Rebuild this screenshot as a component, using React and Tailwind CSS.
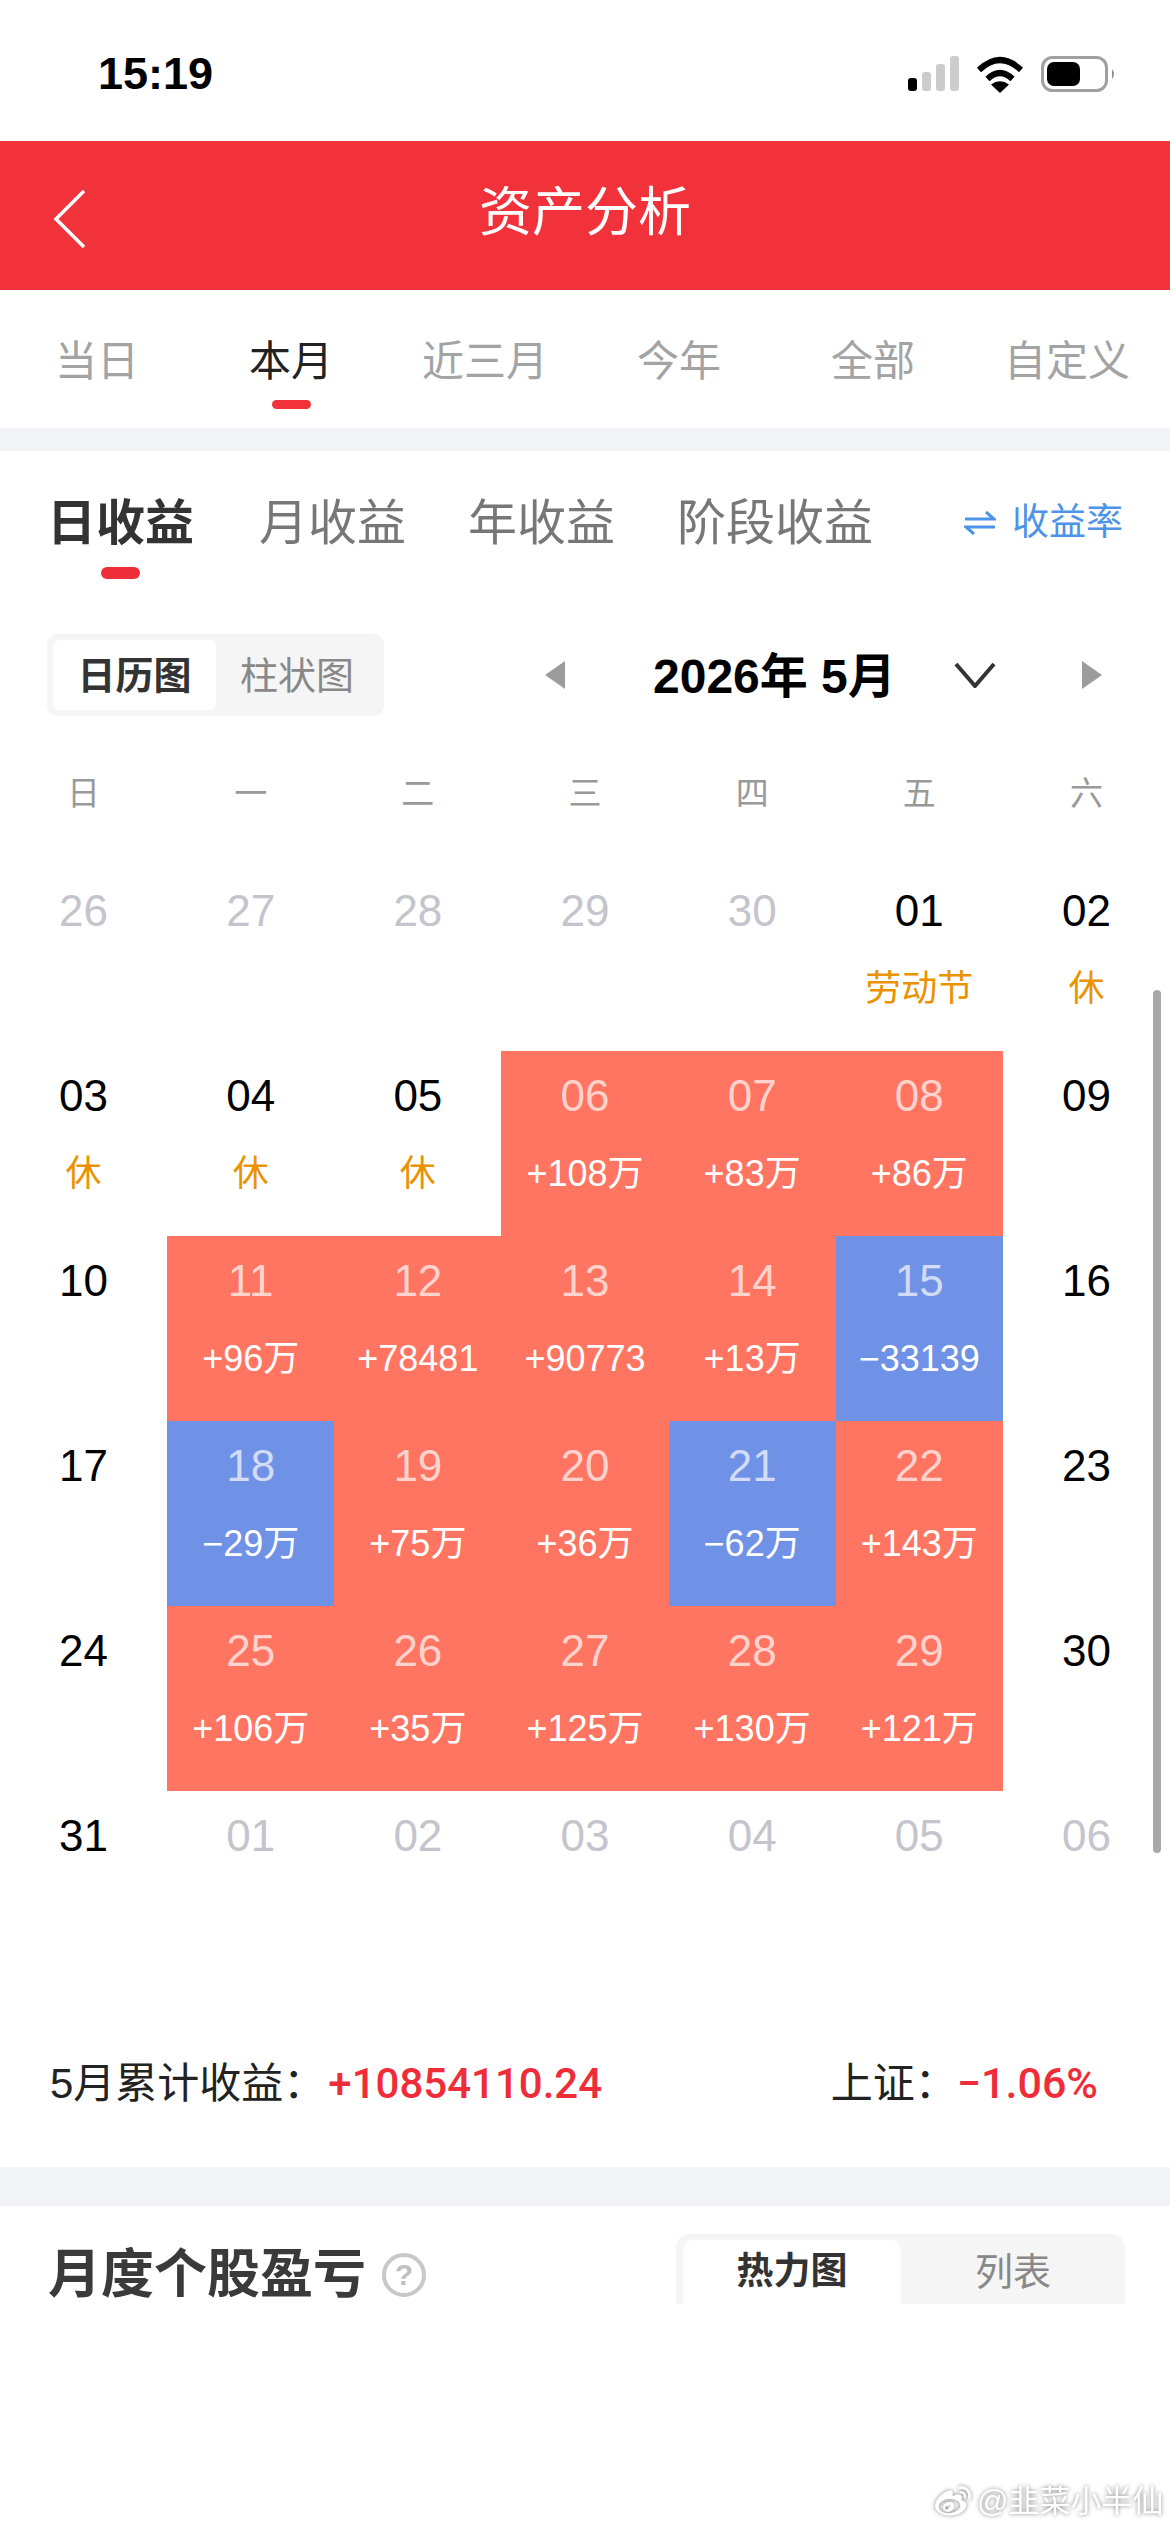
import React from 'react';
import { FaWeibo } from 'react-icons/fa';

const periodTabs = ['当日', '本月', '近三月', '今年', '全部', '自定义'];
const weekDays = ['日', '一', '二', '三', '四', '五', '六'];

// tone: muted = other month, plain = no trading, up = gain, down = loss
const weeks = [
  [
    { d: '26', tone: 'muted' },
    { d: '27', tone: 'muted' },
    { d: '28', tone: 'muted' },
    { d: '29', tone: 'muted' },
    { d: '30', tone: 'muted' },
    { d: '01', tone: 'plain', note: '劳动节' },
    { d: '02', tone: 'plain', note: '休' },
  ],
  [
    { d: '03', tone: 'plain', note: '休' },
    { d: '04', tone: 'plain', note: '休' },
    { d: '05', tone: 'plain', note: '休' },
    { d: '06', tone: 'up', value: '+108万' },
    { d: '07', tone: 'up', value: '+83万' },
    { d: '08', tone: 'up', value: '+86万' },
    { d: '09', tone: 'plain' },
  ],
  [
    { d: '10', tone: 'plain' },
    { d: '11', tone: 'up', value: '+96万' },
    { d: '12', tone: 'up', value: '+78481' },
    { d: '13', tone: 'up', value: '+90773' },
    { d: '14', tone: 'up', value: '+13万' },
    { d: '15', tone: 'down', value: '−33139' },
    { d: '16', tone: 'plain' },
  ],
  [
    { d: '17', tone: 'plain' },
    { d: '18', tone: 'down', value: '−29万' },
    { d: '19', tone: 'up', value: '+75万' },
    { d: '20', tone: 'up', value: '+36万' },
    { d: '21', tone: 'down', value: '−62万' },
    { d: '22', tone: 'up', value: '+143万' },
    { d: '23', tone: 'plain' },
  ],
  [
    { d: '24', tone: 'plain' },
    { d: '25', tone: 'up', value: '+106万' },
    { d: '26', tone: 'up', value: '+35万' },
    { d: '27', tone: 'up', value: '+125万' },
    { d: '28', tone: 'up', value: '+130万' },
    { d: '29', tone: 'up', value: '+121万' },
    { d: '30', tone: 'plain' },
  ],
  [
    { d: '31', tone: 'plain' },
    { d: '01', tone: 'muted' },
    { d: '02', tone: 'muted' },
    { d: '03', tone: 'muted' },
    { d: '04', tone: 'muted' },
    { d: '05', tone: 'muted' },
    { d: '06', tone: 'muted' },
  ],
];

const cellBg = { up: 'bg-[#ff7561]', down: 'bg-[#6f91e6]', plain: '', muted: '' };
const dayColor = {
  up: 'text-white/70',
  down: 'text-white/70',
  plain: 'text-black',
  muted: 'text-[#c4c4cc]',
};

const StatusIcons = () => (
  <div className="flex items-center">
    <svg width="51" height="36" viewBox="0 0 51 36">
      <rect x="0" y="22" width="9" height="13" rx="3" fill="#000" />
      <rect x="14" y="16" width="9" height="19" rx="3" fill="#ccc" />
      <rect x="28" y="8" width="9" height="27" rx="3" fill="#ccc" />
      <rect x="42" y="0" width="9" height="35" rx="3" fill="#ccc" />
    </svg>
    <svg className="ml-[17px]" width="48" height="37" viewBox="0 0 48 37">
      <path d="M3 14 Q24 -6 45 14" fill="none" stroke="#000" strokeWidth="6" />
      <path d="M11.5 23 Q24 11 36.5 23" fill="none" stroke="#000" strokeWidth="6" />
      <path d="M24 37 L15 28.5 Q24 22 33 28.5 Z" fill="#000" />
    </svg>
    <svg className="ml-[17px]" width="75" height="36" viewBox="0 0 75 36">
      <rect x="1.5" y="1.5" width="64" height="33" rx="10" fill="none" stroke="#a0a0a0" strokeWidth="3" />
      <rect x="6" y="6" width="33" height="24" rx="7" fill="#000" />
      <path d="M71 13 Q75 18 71 23 Z" fill="#8e8e8e" />
    </svg>
  </div>
);

const DayCell = ({ cell }) => (
  <div className={`flex h-[185px] flex-col items-center pt-[15px] ${cellBg[cell.tone]}`}>
    <div className={`h-[60px] text-[44px] leading-[60px] ${dayColor[cell.tone]}`}>{cell.d}</div>
    {cell.note && <div className="mt-[23px] h-[50px] text-[36px] leading-[50px] text-[#ea9200]">{cell.note}</div>}
    {cell.value && <div className="mt-[23px] h-[50px] text-[36px] leading-[50px] text-white">{cell.value}</div>}
  </div>
);

export default function App() {
  return (
    <div className="relative h-[2532px] w-[1170px] overflow-hidden bg-white [font-family:'Liberation_Sans','Noto_Sans_CJK_SC',sans-serif]">
      {/* Status bar */}
      <div className="flex h-[141px] items-center justify-between pl-[98px] pr-[54px] pt-[7px]">
        <span className="text-[45px] font-bold text-black">15:19</span>
        <StatusIcons />
      </div>

      {/* Title bar */}
      <div className="relative flex h-[149px] items-center justify-center bg-[#f1323b] pb-[6px]">
        <svg className="absolute left-[52px] top-[48px]" width="34" height="60" viewBox="0 0 34 60">
          <path d="M32 2 L4 30 L32 58" fill="none" stroke="#fff" strokeWidth="3.5" />
        </svg>
        <span className="text-[53px] text-white">资产分析</span>
      </div>

      {/* Period tabs */}
      <div className="grid h-[138px] grid-cols-6 pr-[6px]">
        {periodTabs.map((tab, i) => (
          <div key={tab} className="flex flex-col items-center pt-[46px]">
            <span className={`text-[42px] leading-[52px] ${i === 1 ? 'text-[#222]' : 'text-[#a3a3a3]'}`}>{tab}</span>
            {i === 1 && <div className="mt-[12px] h-[9px] w-[39px] rounded-full bg-[#f1323b]" />}
          </div>
        ))}
      </div>
      <div className="h-[23px] bg-[#f2f3f6]" />

      {/* Return type tabs */}
      <div className="flex h-[183px] items-start pl-[47px] pr-[47px] pt-[39px]">
        <div className="flex flex-col items-center">
          <span className="text-[49px] font-bold leading-[66px] text-[#333]">日收益</span>
          <div className="mt-[11px] h-[12px] w-[39px] rounded-full bg-[#ef2d38]" />
        </div>
        <span className="ml-[65px] text-[49px] leading-[66px] text-[#777]">月收益</span>
        <span className="ml-[62px] text-[49px] leading-[66px] text-[#777]">年收益</span>
        <span className="ml-[62px] text-[49px] leading-[66px] text-[#777]">阶段收益</span>
        <div className="ml-auto flex h-[66px] items-center text-[#4d94e8]">
          <svg width="32" height="26" viewBox="0 0 32 26">
            <path d="M1 9 H30 L22 2 M31 17 H2 L10 24" fill="none" stroke="currentColor" strokeWidth="3" />
          </svg>
          <span className="ml-[16px] text-[37px]">收益率</span>
        </div>
      </div>

      {/* View switch and month picker */}
      <div className="flex h-[82px] items-center">
        <div className="ml-[47px] flex h-[82px] w-[337px] rounded-[10px] bg-[#f5f5f5] p-[6px]">
          <div className="flex w-[163px] items-center justify-center rounded-[6px] bg-white pt-[2px] text-[38px] font-bold text-[#333]">日历图</div>
          <div className="flex flex-1 items-center justify-center pt-[2px] text-[38px] text-[#888]">柱状图</div>
        </div>
        <svg className="ml-[161px]" width="20" height="28" viewBox="0 0 20 28">
          <path d="M20 0 V28 L0 14 Z" fill="#9c9c9c" />
        </svg>
        <span className="ml-[88px] w-[240px] whitespace-nowrap pt-[3px] text-[48px] font-bold text-black">2026年 5月</span>
        <svg className="ml-[61px]" width="42" height="26" viewBox="0 0 42 26">
          <path d="M2 2 L21 24 L40 2" fill="none" stroke="#333" strokeWidth="4" />
        </svg>
        <svg className="ml-[86px]" width="20" height="28" viewBox="0 0 20 28">
          <path d="M0 0 V28 L20 14 Z" fill="#9c9c9c" />
        </svg>
      </div>

      {/* Weekday header */}
      <div className="grid h-[150px] grid-cols-7 pt-[6px]">
        {weekDays.map((day) => (
          <div key={day} className="flex items-center justify-center text-[33px] text-[#999]">{day}</div>
        ))}
      </div>

      {/* Month grid */}
      <div className="grid grid-cols-7">
        {weeks.flat().map((cell, i) => (
          <DayCell key={i} cell={cell} />
        ))}
      </div>

      {/* Month total */}
      <div className="flex h-[191px] items-center justify-between pl-[50px] pr-[72px] pt-[23px] text-[42px] text-[#222]">
        <div className="flex items-center">
          <span>5月累计收益：</span>
          <span className="ml-[3px] text-[42px] font-medium text-[#ef2d38] [font-family:Roboto,sans-serif]">+10854110.24</span>
        </div>
        <div className="flex items-center">
          <span>上证：</span>
          <span className="text-[43px] font-medium text-[#ef2d38] [font-family:Roboto,sans-serif]">−1.06%</span>
        </div>
      </div>
      <div className="h-[39px] bg-[#f2f3f6]" />

      {/* Monthly stock profit and loss */}
      <div className="flex items-start justify-between pl-[48px] pr-[45px] pt-[28px]">
        <div className="flex h-[70px] items-center pt-[12px]">
          <span className="text-[53px] font-bold leading-[70px] text-[#3a3a3a]">月度个股盈亏</span>
          <span className="ml-[16px] flex h-[44px] w-[44px] items-center justify-center rounded-full border-4 border-[#c8c8c8] text-[30px] font-bold leading-none text-[#c0c0c0]">?</span>
        </div>
        <div className="flex h-[70px] w-[449px] rounded-t-[14px] bg-[#f5f5f5] pl-[7px] pt-[6px]">
          <div className="flex w-[218px] items-center justify-center rounded-t-[10px] bg-white text-[37px] font-bold text-[#333]">热力图</div>
          <div className="flex flex-1 items-center justify-center text-[38px] text-[#888]">列表</div>
        </div>
      </div>

      {/* Page scrollbar */}
      <div className="absolute left-[1153px] top-[990px] h-[863px] w-[8px] rounded-full bg-[#a8a8a8]" />

      {/* Weibo watermark */}
      <div className="absolute left-[932px] top-[2484px] flex items-center whitespace-nowrap text-white [filter:drop-shadow(0_0_2px_rgba(0,0,0,0.5))]">
        <FaWeibo className="h-[36px] w-[42px]" />
        <span className="ml-[3px] text-[31px] leading-[36px]">@韭菜小半仙</span>
      </div>
    </div>
  );
}
